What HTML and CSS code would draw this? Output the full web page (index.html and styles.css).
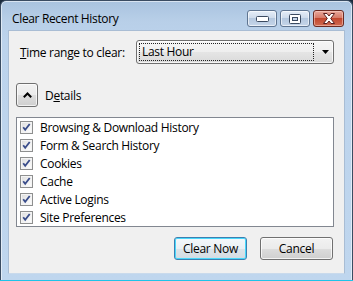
FILE: index.html
```html
<!DOCTYPE html>
<html>
<head>
<meta charset="utf-8">
<link rel="stylesheet" href="styles.css">
</head>
<body>
<div class="window">
  <div class="titlebar">
    <span class="title">Clear Recent History</span>
    <div class="caps">
      <div class="cap">
        <svg width="13" height="6" viewBox="0 0 13 6"><rect x="0.5" y="0.5" width="12" height="5" rx="1" fill="#fff" stroke="#3b4a60"/></svg>
      </div>
      <div class="cap">
        <svg width="12" height="10" viewBox="0 0 12 10"><rect x="0.5" y="0.5" width="11" height="9" rx="1" fill="#fff" stroke="#3b4a60"/><rect x="3.5" y="3.5" width="5" height="3" fill="#c6d6ea" stroke="#3b4a60"/></svg>
      </div>
      <div class="cap close">
        <svg width="16" height="11" viewBox="0 0 16 11"><path d="M2.5 0.5h3.5l2 2.5 2-2.5h3.5l-3.8 5 3.8 5h-3.5l-2-2.5-2 2.5h-3.5l3.8-5z" fill="#fff" stroke="#5a2020" stroke-width="1" stroke-linejoin="round"/></svg>
      </div>
    </div>
  </div>
  <div class="client">
    <div class="row-time">
      <span class="label"><u>T</u>ime range to clear:</span>
      <div class="combo">
        <div class="combo-focus">Last Hour</div>
        <svg class="combo-arrow" width="7" height="4" viewBox="0 0 7 4"><path d="M0 0h7l-3.5 4z" fill="#000"/></svg>
      </div>
    </div>
    <div class="row-details">
      <div class="tog">
        <svg width="9" height="6" viewBox="0 0 9 6"><path d="M0.8 5.2L4.5 1.5 8.2 5.2" fill="none" stroke="#000" stroke-width="2"/></svg>
      </div>
      <span class="label">D<u>e</u>tails</span>
    </div>
    <div class="list">
      <div class="item"><span class="cb"></span>Browsing &amp; Download History</div>
      <div class="item"><span class="cb"></span>Form &amp; Search History</div>
      <div class="item"><span class="cb"></span>Cookies</div>
      <div class="item"><span class="cb"></span>Cache</div>
      <div class="item"><span class="cb"></span>Active Logins</div>
      <div class="item"><span class="cb"></span>Site Preferences</div>
    </div>
    <div class="row-buttons">
      <div class="btn default">Clear Now</div>
      <div class="btn">Cancel</div>
    </div>
  </div>
  <div class="bottom"></div>
</div>
</body>
</html>
```
FILE: styles.css
```css
html, body {
  margin: 0;
  padding: 0;
  background: #1a2a3c;
}
body {
  width: 353px;
  height: 281px;
  overflow: hidden;
  font-family: "Open Sans", "Noto Sans", sans-serif;
  font-size: 12px;
  color: #000;
}
.window {
  box-sizing: border-box;
  width: 353px;
  height: 281px;
  border: 1px solid #3a4c62;
  border-bottom: none;
  border-radius: 6px 6px 0 0;
  background: linear-gradient(#a9c3df 0px, #b8cfe8 20px, #bcd3ec 40px, #bfd6ee 281px);
  box-shadow: inset 0 0 0 1px rgba(255,255,255,0.55);
  display: flex;
  flex-direction: column;
}
.titlebar {
  height: 29px;
  display: flex;
  align-items: flex-start;
  padding: 0 8px 0 11px;
}
.title {
  margin-top: 9px;
  font-size: 12px;
  letter-spacing: -0.35px;
  color: #000;
}
.caps {
  margin-left: auto;
  margin-top: 9px;
  display: flex;
  gap: 3px;
}
.cap {
  box-sizing: border-box;
  width: 30px;
  height: 17px;
  border: 1px solid #5f7591;
  border-radius: 3px;
  background: linear-gradient(#e6eef8 0%, #cfdcec 45%, #b5c8df 50%, #c6d6ea 100%);
  box-shadow: inset 0 0 0 1px rgba(255,255,255,0.6);
  display: flex;
  align-items: center;
  justify-content: center;
}
.cap.close {
  width: 31px;
  border-color: #6b2a22;
  background: linear-gradient(#e9a89c 0%, #d67a68 45%, #c2472f 50%, #cf6b52 100%);
  box-shadow: inset 0 0 0 1px rgba(255,220,210,0.5);
}
.client {
  box-sizing: border-box;
  margin: 0 7px;
  height: 244px;
  background: #f0f0f0;
  border: 1px solid #a9bdd4;
  border-bottom-color: #c9daec;
  padding: 9px 10px 0 7px;
}
.row-time {
  display: flex;
  align-items: center;
  height: 24px;
}
.row-time .label {
  margin-left: 4px;
  width: 116px;
  letter-spacing: -0.3px;
}
.combo {
  box-sizing: border-box;
  width: 198px;
  height: 24px;
  border: 1px solid #707070;
  border-radius: 3px;
  background: linear-gradient(#f5f5f5 0%, #efefef 50%, #e5e5e5 51%, #dadada 100%);
  box-shadow: inset 0 0 0 1px rgba(255,255,255,0.7);
  display: flex;
  align-items: center;
  padding: 2px;
}
.combo-focus {
  box-sizing: border-box;
  width: 175px;
  height: 18px;
  border: 1px dotted #222;
  padding-left: 2px;
  line-height: 15px;
  letter-spacing: -0.3px;
}
.combo-arrow {
  margin-left: 8px;
}
.row-details {
  display: flex;
  align-items: center;
  margin-top: 19px;
  height: 24px;
}
.tog {
  box-sizing: border-box;
  width: 22px;
  height: 24px;
  border: 1px solid #707070;
  border-radius: 3px;
  background: linear-gradient(#f2f2f2 0%, #ebebeb 50%, #dddddd 51%, #cfcfcf 100%);
  box-shadow: inset 0 0 0 1px rgba(255,255,255,0.7);
  display: flex;
  align-items: center;
  justify-content: center;
}
.row-details .label {
  margin-left: 7px;
  letter-spacing: -0.3px;
}
.list {
  box-sizing: border-box;
  margin-top: 10px;
  width: 318px;
  height: 110px;
  border: 1px solid #828790;
  background: #fff;
  padding: 0 0 0 3px;
}
.item {
  height: 18px;
  display: flex;
  align-items: center;
  letter-spacing: -0.3px;
}
.cb {
  box-sizing: border-box;
  width: 13px;
  height: 13px;
  margin-right: 7px;
  border: 1px solid #8e8f8f;
  background:
    url("data:image/svg+xml,%3Csvg xmlns='http://www.w3.org/2000/svg' width='11' height='11' viewBox='0 0 11 11'%3E%3Cpath d='M2.2 5.2l2 2.6 4.5-5.8' fill='none' stroke='%23394c8a' stroke-width='1.8'/%3E%3C/svg%3E") center/11px 11px no-repeat,
    linear-gradient(135deg, #dcdcdc, #f6f6f6 70%, #fff);
  box-shadow: inset 0 0 0 1px #f4f4f4;
}
.row-buttons {
  display: flex;
  justify-content: flex-end;
  gap: 13px;
  margin-top: 10px;
  padding-right: 1px;
}
.btn {
  box-sizing: border-box;
  width: 73px;
  height: 23px;
  border: 1px solid #707070;
  border-radius: 3px;
  background: linear-gradient(#f2f2f2 0%, #ebebeb 50%, #dddddd 51%, #cfcfcf 100%);
  box-shadow: inset 0 0 0 1px rgba(255,255,255,0.75);
  display: flex;
  align-items: center;
  justify-content: center;
  letter-spacing: -0.3px;
}
.btn.default {
  border-color: #3c7fb1;
  box-shadow: inset 0 0 0 1px #48d8fb;
  background: linear-gradient(#f4f8fb 0%, #eaf0f4 50%, #dde4e9 51%, #d3dce3 100%);
}
.bottom {
  flex: 1;
  border-bottom: 1px solid #1fc3e8;
  margin: 0 -1px;
}
```
